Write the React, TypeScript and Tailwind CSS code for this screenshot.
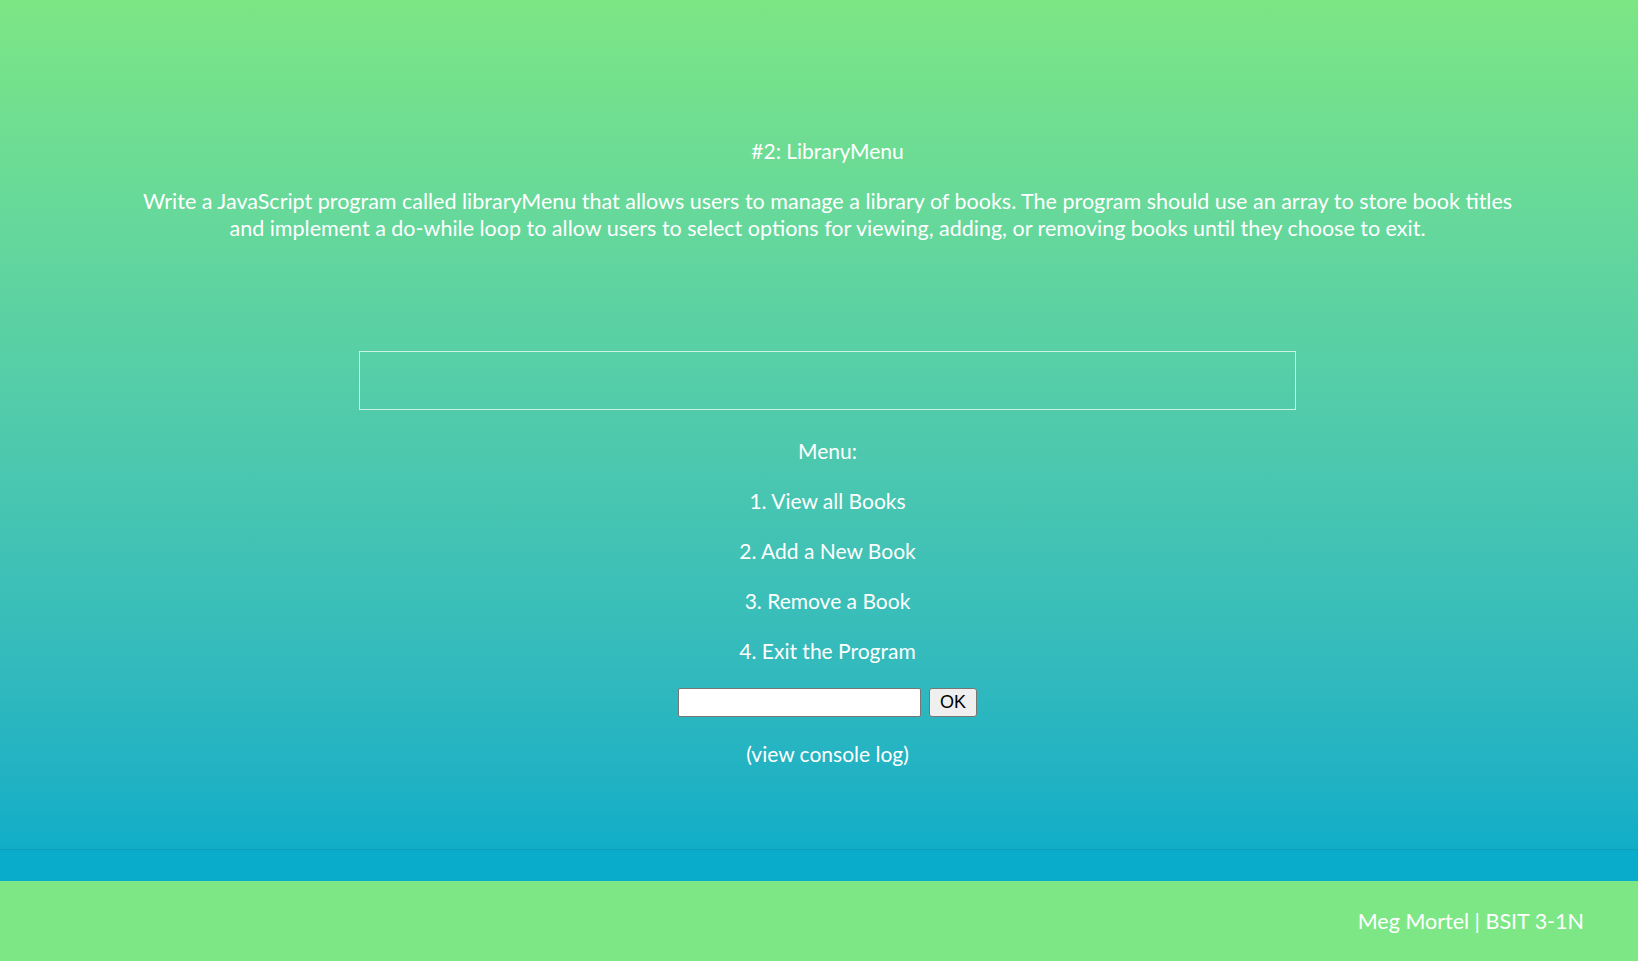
import React from "react";

export default function App() {
  const font = { fontFamily: "'Gill Sans', Lato, 'Open Sans', sans-serif" };
  return (
    <div className="w-full min-h-screen flex flex-col" style={font}>
      <main className="h-[850px] border-b border-[#0c9fb8] bg-gradient-to-b from-[#7ce684] to-[#10adc8] flex flex-col items-center pl-[17px] text-white">
        <h1 className="mt-[138px] text-[21px] leading-[26px] font-normal">#2: LibraryMenu</h1>
        <p className="mt-[24px] text-[21.5px] leading-[27px] text-center whitespace-nowrap">
          Write a JavaScript program called libraryMenu that allows users to manage a library of books. The program should use an array to store book titles
          <br />
          and implement a do-while loop to allow users to select options for viewing, adding, or removing books until they choose to exit.
        </p>
        <div className="mt-[109px] w-[937px] h-[59px] border border-white/70"></div>
        <div className="mt-[27px] flex flex-col items-center gap-[22px] text-[21px] leading-[28px]">
          <div>Menu:</div>
          <div>1. View all Books</div>
          <div>2. Add a New Book</div>
          <div>3. Remove a Book</div>
          <div>4. Exit the Program</div>
        </div>
        <div className="mt-[23px] flex items-center gap-[8px]">
          <input className="w-[243px] h-[29px] bg-white border border-[#767676] rounded-[2px] px-1 text-black" />
          <button className="w-[48px] h-[29px] bg-[#efefef] border border-[#767676] rounded-[3px] text-black text-[18px]" style={{ fontFamily: "'Liberation Sans', Arial, sans-serif" }}>OK</button>
        </div>
        <div className="mt-[23px] text-[21px] leading-[28px]">(view console log)</div>
      </main>
      <div className="h-[31px] bg-[#0aaccb]"></div>
      <footer className="h-[80px] bg-[#7de786] flex items-center justify-end pr-[54px] text-white text-[21.5px]">
        Meg Mortel | BSIT 3-1N
      </footer>
    </div>
  );
}
